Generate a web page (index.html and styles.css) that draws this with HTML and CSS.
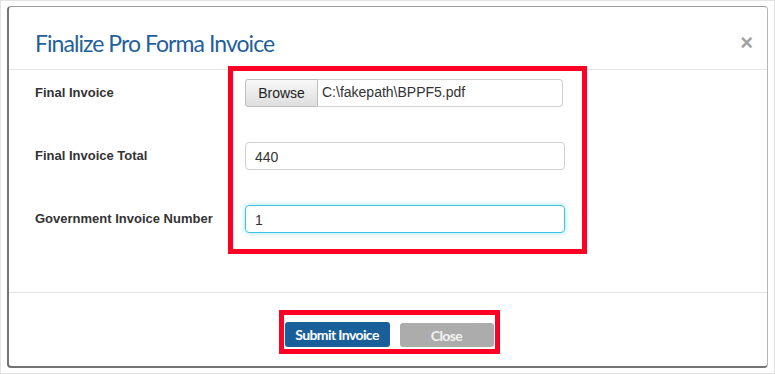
FILE: index.html
```html
<!DOCTYPE html>
<html lang="en">
<head>
    <meta charset="UTF-8">
    <title>Finalize Pro Forma Invoice</title>
    <link rel="stylesheet" href="styles.css">
</head>
<body>
    <div class="modal">
        <div class="modal-header">
            <h4 class="modal-title">Finalize Pro Forma Invoice</h4>
            <span class="close-x">&times;</span>
        </div>
        <div class="modal-body">
            <div class="labels">
                <label class="field-label">Final Invoice</label>
                <label class="field-label">Final Invoice Total</label>
                <label class="field-label">Government Invoice Number</label>
            </div>
            <div class="highlight fields">
                <div class="file-input">
                    <span class="browse-btn">Browse</span>
                    <span class="file-name">C:\fakepath\BPPF5.pdf</span>
                </div>
                <div class="text-input">440</div>
                <div class="text-input focused">1</div>
            </div>
        </div>
        <div class="modal-footer">
            <div class="highlight actions">
                <button class="btn btn-primary">Submit Invoice</button>
                <button class="btn btn-grey">Close</button>
            </div>
        </div>
    </div>
</body>
</html>
```

FILE: styles.css
```css
html, body {
    height: 100%;
}

body {
    margin: 0;
    box-sizing: border-box;
    border: 1px solid #e4e4e4;
    padding: 5px 6px 0 6px;
    background: #fff;
    font-family: 'Liberation Sans', Arial, sans-serif;
}

.modal {
    width: 761px;
    height: 362px;
    box-sizing: border-box;
    border-left: 2px solid #747474;
    border-top: 1px solid #9a9a9a;
    border-right: 1px solid #b4b4b4;
    border-bottom: 2px solid #747474;
    border-radius: 4px;
    display: flex;
    flex-direction: column;
}

.modal-header {
    height: 63px;
    box-sizing: border-box;
    border-bottom: 1px solid #e5e5e5;
    display: flex;
    align-items: center;
    justify-content: space-between;
    padding: 9px 14px 0 26px;
}

.modal-title {
    margin: 0;
    font-family: 'Lato', sans-serif;
    font-weight: normal;
    font-size: 23px;
    color: #1f5f9b;
    letter-spacing: -0.95px;
}

.close-x {
    font-size: 22px;
    font-weight: bold;
    color: #a2a2a2;
    line-height: 1;
}

.modal-body {
    height: 222px;
    box-sizing: border-box;
    display: flex;
    padding-left: 26px;
}

.labels {
    width: 193px;
    padding-top: 9px;
    display: flex;
    flex-direction: column;
    gap: 35px;
}

.field-label {
    height: 28px;
    line-height: 27px;
    font-size: 13px;
    font-weight: bold;
    color: #333;
}

.highlight {
    border: 5px solid #ff0024;
}

.fields {
    box-sizing: border-box;
    width: 359px;
    height: 188px;
    margin-top: -4px;
    padding: 8px 17px 0 12px;
    display: flex;
    flex-direction: column;
    gap: 35px;
}

.file-input {
    display: flex;
    width: 318px;
    height: 28px;
}

.browse-btn {
    width: 73px;
    box-sizing: border-box;
    border: 1px solid #bdbdbd;
    border-radius: 3px 0 0 3px;
    background: linear-gradient(#f8f8f8, #dedede);
    font-size: 14px;
    color: #222;
    text-align: center;
    line-height: 27px;
}

.file-name {
    flex: 1;
    border: 1px solid #cfcfcf;
    border-left: none;
    border-radius: 0 4px 4px 0;
    font-size: 14px;
    color: #333;
    padding-left: 4px;
    line-height: 24px;
}

.text-input {
    height: 28px;
    box-sizing: border-box;
    border: 1px solid #cfcfcf;
    border-radius: 4px;
    padding-left: 9px;
    font-size: 14px;
    color: #333;
    line-height: 28px;
}

.text-input.focused {
    border-color: #3cc4e6;
    box-shadow: 0 0 5px rgba(60, 196, 230, 0.5);
}

.modal-footer {
    flex: 1;
    border-top: 1px solid #e5e5e5;
    display: flex;
    justify-content: center;
    align-items: flex-start;
    padding-top: 17px;
    padding-left: 2px;
}

.actions {
    display: flex;
    gap: 10px;
    padding: 7px 1px 2px 1px;
}

.btn {
    height: 25px;
    border: none;
    border-radius: 3px;
    font-family: 'Lato', sans-serif;
    font-weight: bold;
    font-size: 14px;
    color: #fff;
    letter-spacing: -0.6px;
    padding: 0;
}

.btn-primary {
    width: 105px;
    background: #19609a;
}

.btn-grey {
    width: 94px;
    background: #acacac;
    color: #f2f2f2;
    margin-top: 1px;
    height: 24px;
}
```
